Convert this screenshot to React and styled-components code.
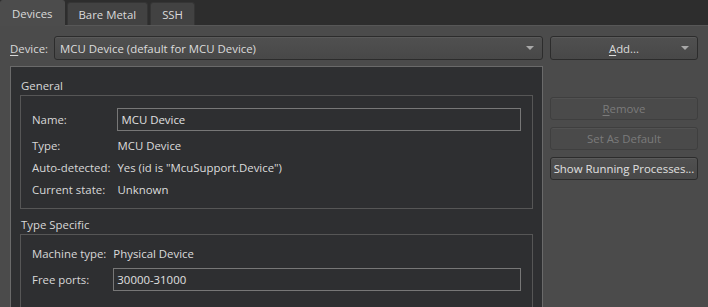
import React from 'react';
import styled, { createGlobalStyle } from 'styled-components';

const GlobalStyle = createGlobalStyle`
  html, body {
    margin: 0;
    padding: 0;
    background: #2b2b2b;
    overflow: hidden;
  }
  body {
    font-family: "Open Sans", "Noto Sans", sans-serif;
    font-size: 11.4px;
    color: #d8d8d8;
  }
`;

const Window = styled.div`
  width: 708px;
  height: 307px;
  display: flex;
  flex-direction: column;
  overflow: hidden;
`;

const TabBar = styled.div`
  display: flex;
  align-items: flex-end;
  gap: 2px;
  height: 26px;
  background: #2d2d2d;
  flex-shrink: 0;
`;

const Tab = styled.div`
  height: ${(p) => (p.$active ? '26px' : '23px')};
  margin-bottom: ${(p) => (p.$active ? '0' : '1px')};
  padding: 0 11px;
  display: flex;
  align-items: center;
  box-sizing: border-box;
  background: ${(p) => (p.$active ? '#4c4c4c' : '#424242')};
  border: 1px solid ${(p) => (p.$active ? '#4c4c4c' : '#353535')};
  border-bottom: none;
  border-radius: 3px 3px 0 0;
  color: #dadada;
  position: relative;
  z-index: ${(p) => (p.$active ? 2 : 1)};
`;

const Pane = styled.div`
  flex: 1;
  background: #4b4b4b;
  border-top: 1px solid #575757;
  margin-top: -1px;
  display: grid;
  grid-template-columns: 533px 148px;
  grid-template-rows: 24px 1fr;
  column-gap: 7px;
  row-gap: 6px;
  padding: 10px 0 0 10px;
  min-height: 0;
`;

const DeviceRow = styled.div`
  display: flex;
  align-items: center;
  gap: 6px;
`;

const Mnemonic = styled.span`
  text-decoration: underline;
  text-underline-offset: 2px;
`;

const ComboBox = styled.div`
  flex: 1;
  height: 24px;
  box-sizing: border-box;
  border: 1px solid #2c2c2c;
  border-radius: 3px;
  background: linear-gradient(#505050, #484848);
  box-shadow: inset 0 1px 0 #5a5a5a;
  display: flex;
  align-items: center;
  justify-content: space-between;
  padding: 0 8px 0 5px;
  color: #dcdcdc;
`;

const Arrow = styled.span`
  width: 0;
  height: 0;
  border-left: 4px solid transparent;
  border-right: 4px solid transparent;
  border-top: 4px solid #a8a8a8;
`;

const AddButton = styled(ComboBox)`
  position: relative;
  justify-content: center;
  padding: 0;

  ${Arrow} {
    position: absolute;
    right: 8px;
    top: 9px;
  }
`;

const ScrollArea = styled.div`
  border: 1px solid #6a6a6a;
  border-bottom: none;
  background: #2e2f31;
  padding: 11px 9px 0 9px;
  min-height: 0;
  overflow: hidden;
`;

const ButtonColumn = styled.div`
  display: flex;
  flex-direction: column;
  gap: 7px;
  padding-top: 31px;
`;

const PushButton = styled.div`
  height: 23px;
  box-sizing: border-box;
  border-radius: 3px;
  display: flex;
  align-items: center;
  justify-content: center;
  white-space: nowrap;
  border: 1px solid ${(p) => (p.$disabled ? '#3f3f3f' : '#2c2c2c')};
  background: ${(p) => (p.$disabled ? '#4a4a4a' : 'linear-gradient(#505050, #484848)')};
  box-shadow: ${(p) => (p.$disabled ? 'inset 0 1px 0 #525252' : 'inset 0 1px 0 #5a5a5a')};
  color: ${(p) => (p.$disabled ? '#7b7b7b' : '#e0e0e0')};
`;

const GroupTitle = styled.div`
  height: 17px;
  line-height: 16px;
  padding-left: 1px;
`;

const GroupFrame = styled.div`
  border: 1px solid #565656;
  padding: ${(p) => p.$pad};
  display: grid;
  grid-template-columns: auto 1fr;
  column-gap: 7px;
  align-items: center;
  margin-bottom: 8px;
`;

const Label = styled.div`
  height: ${(p) => p.$h || 22}px;
  line-height: ${(p) => p.$h || 22}px;
  white-space: nowrap;
  margin-bottom: ${(p) => p.$gap || 0}px;
`;

const Value = styled(Label)`
  color: #dcdcdc;
`;

const LineEdit = styled.div`
  height: 23px;
  box-sizing: border-box;
  border: 1px solid #777;
  background: #2e2f31;
  padding: 0 3px;
  line-height: 21px;
  color: #e0e0e0;
  margin-bottom: ${(p) => p.$gap || 0}px;
`;

const App = () => {
  return (
    <>
      <GlobalStyle />
      <Window>
        <TabBar>
          <Tab $active>Devices</Tab>
          <Tab>Bare Metal</Tab>
          <Tab>SSH</Tab>
        </TabBar>
        <Pane>
          <DeviceRow>
            <span><Mnemonic>D</Mnemonic>evice:</span>
            <ComboBox>
              <span>MCU Device (default for MCU Device)</span>
              <Arrow />
            </ComboBox>
          </DeviceRow>
          <AddButton>
            <span><Mnemonic>A</Mnemonic>dd...</span>
            <Arrow />
          </AddButton>

          <ScrollArea>
            <GroupTitle>General</GroupTitle>
            <GroupFrame $pad="12px 11px 7px 11px">
              <Label $h={23} $gap={4}>Name:</Label>
              <LineEdit $gap={4}>MCU Device</LineEdit>
              <Label>Type:</Label>
              <Value>MCU Device</Value>
              <Label>Auto-detected:</Label>
              <Value>Yes (id is "McuSupport.Device")</Value>
              <Label>Current state:</Label>
              <Value>Unknown</Value>
            </GroupFrame>
            <GroupTitle>Type Specific</GroupTitle>
            <GroupFrame $pad="8px 11px 16px 11px">
              <Label $gap={3}>Machine type:</Label>
              <Value $gap={3}>Physical Device</Value>
              <Label $h={23}>Free ports:</Label>
              <LineEdit>30000-31000</LineEdit>
            </GroupFrame>
          </ScrollArea>

          <ButtonColumn>
            <PushButton $disabled><span><Mnemonic>R</Mnemonic>emove</span></PushButton>
            <PushButton $disabled>Set As Default</PushButton>
            <PushButton>Show Running Processes...</PushButton>
          </ButtonColumn>
        </Pane>
      </Window>
    </>
  );
};

export default App;
